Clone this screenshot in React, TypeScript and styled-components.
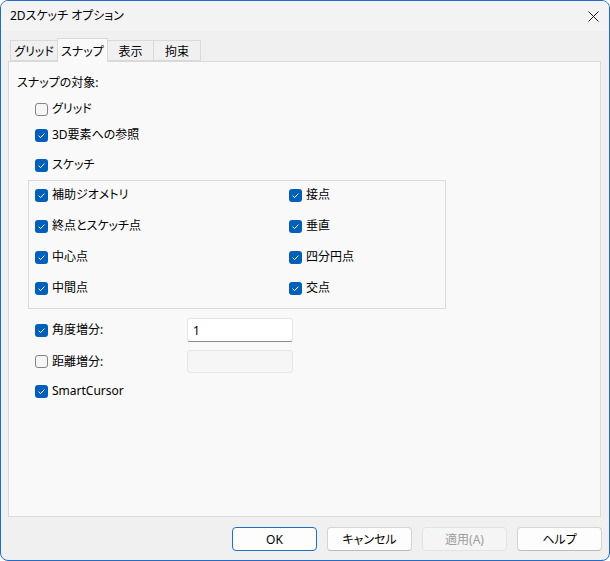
import React from "react";
import styled, { createGlobalStyle } from "styled-components";

const Global = createGlobalStyle`
  html, body { margin: 0; padding: 0; background: #ffffff; }
  body {
    font-family: "Noto Sans", "Noto Sans CJK JP", sans-serif;
    font-size: 12px;
    color: #000;
  }
  * { box-sizing: border-box; }
`;

const Window = styled.div`
  width: 610px;
  height: 561px;
  border: 1px solid #1f6ccb;
  border-radius: 8px;
  background: #f0f0f0;
  overflow: hidden;
  display: flex;
  flex-direction: column;
  font-feature-settings: "palt";
`;

const TitleBar = styled.div`
  height: 30px;
  background: #f3f3f3;
  display: flex;
  align-items: center;
  justify-content: space-between;
  padding: 0 10px 0 9px;
`;

const Title = styled.span`
  font-size: 12px;
  line-height: 16px;
  color: #000;
`;

const CloseBtn = styled.div`
  width: 12px;
  height: 12px;
  display: flex;
  align-items: center;
  justify-content: center;
`;

const Body = styled.div`
  flex: 1;
  display: flex;
  flex-direction: column;
  padding: 7px 8px 0 7px;
`;

const TabStrip = styled.div`
  display: flex;
  align-items: flex-end;
  height: 23px;
  padding-left: 2px;
  position: relative;
  z-index: 1;
`;

const Tab = styled.div<{ $active?: boolean; $w: number }>`
  width: ${(p) => p.$w}px;
  height: ${(p) => (p.$active ? 24 : 21)}px;
  margin-bottom: ${(p) => (p.$active ? -1 : 0)}px;
  border: 1px solid #d9d9d9;
  border-bottom: ${(p) => (p.$active ? "none" : "1px solid #d9d9d9")};
  margin-right: -1px;
  background: ${(p) => (p.$active ? "#f9f9f9" : "#f0f0f0")};
  display: flex;
  align-items: center;
  justify-content: center;
  padding-top: ${(p) => (p.$active ? 0 : 1)}px;
  font-size: 12px;
  color: #000;
  position: relative;
  z-index: ${(p) => (p.$active ? 2 : 1)};
`;

const Panel = styled.div`
  width: 593px;
  height: 456px;
  border: 1px solid #d9d9d9;
  background: #f9f9f9;
  display: flex;
  flex-direction: column;
  padding: 13px 8px 0 8px;
`;

const Heading = styled.div`
  height: 16px;
  line-height: 16px;
  font-size: 12px;
`;

const Row = styled.label<{ $mt: number; $h?: number; $indent?: number }>`
  display: flex;
  align-items: center;
  height: ${(p) => p.$h ?? 16}px;
  margin-top: ${(p) => p.$mt}px;
  padding-left: ${(p) => p.$indent ?? 18}px;
`;

const BoxWrap = styled.span<{ $checked: boolean }>`
  width: 13px;
  height: 13px;
  flex: none;
  border-radius: 3px;
  background: ${(p) => (p.$checked ? "#005fb8" : "#f6f6f6")};
  border: ${(p) => (p.$checked ? "none" : "1px solid #858585")};
  display: flex;
  align-items: center;
  justify-content: center;
`;

const LabelText = styled.span`
  margin-left: 4px;
  font-size: 12px;
  line-height: 16px;
  white-space: nowrap;
`;

const CheckCell = styled.span<{ $w?: number }>`
  display: flex;
  align-items: center;
  width: ${(p) => (p.$w ? `${p.$w}px` : "auto")};
`;

const Group = styled.div`
  margin-top: 7px;
  margin-left: 11px;
  width: 418px;
  border: 1px solid #dadada;
  padding: 6px 6px 12px 6px;
  display: grid;
  grid-template-columns: 254px 1fr;
  grid-auto-rows: 16px;
  row-gap: 15px;
`;

const Input = styled.div<{ $disabled?: boolean; $h: number }>`
  width: 106px;
  height: ${(p) => p.$h}px;
  border: 1px solid #e5e5e5;
  border-bottom: 1px solid ${(p) => (p.$disabled ? "#e5e5e5" : "#8a8a8a")};
  border-radius: 3px;
  background: ${(p) => (p.$disabled ? "#f6f6f6" : "#ffffff")};
  padding-left: 5px;
  display: flex;
  align-items: center;
  font-size: 12px;
`;

const Footer = styled.div`
  display: flex;
  justify-content: flex-end;
  gap: 10px;
  padding: 10px 0 0 0;
  margin-right: -1px;
`;

const Button = styled.div<{ $variant?: "default" | "disabled" }>`
  width: 85px;
  height: 24px;
  border-radius: 4px;
  display: flex;
  align-items: center;
  justify-content: center;
  font-size: 12px;
  background: ${(p) => (p.$variant === "disabled" ? "#f5f5f5" : "#fdfdfd")};
  color: ${(p) => (p.$variant === "disabled" ? "#9d9d9d" : "#000")};
  border: 1px solid
    ${(p) =>
      p.$variant === "default"
        ? "#1f6fc5"
        : p.$variant === "disabled"
        ? "#e3e3e3"
        : "#d3d3d3"};
  border-bottom-color: ${(p) =>
    p.$variant === "default"
      ? "#1f6fc5"
      : p.$variant === "disabled"
      ? "#e3e3e3"
      : "#bcbcbc"};
`;

function Check({ checked }: { checked: boolean }) {
  return (
    <BoxWrap $checked={checked}>
      {checked && (
        <svg width="13" height="13" viewBox="0 0 13 13">
          <polyline
            points="3.6,6.7 5.6,8.6 9.4,4.6"
            fill="none"
            stroke="#ffffff"
            strokeWidth="1"
          />
        </svg>
      )}
    </BoxWrap>
  );
}

function CheckItem({ label, checked = true, w }: { label: string; checked?: boolean; w?: number }) {
  return (
    <CheckCell $w={w}>
      <Check checked={checked} />
      <LabelText>{label}</LabelText>
    </CheckCell>
  );
}

export default function App() {
  return (
    <>
      <Global />
      <Window>
        <TitleBar>
          <Title>2Dスケッチ オプション</Title>
          <CloseBtn>
            <svg width="11" height="11" viewBox="0 0 11 11">
              <path d="M0.5 0.5 L10.5 10.5 M10.5 0.5 L0.5 10.5" stroke="#1a1a1a" strokeWidth="1" />
            </svg>
          </CloseBtn>
        </TitleBar>
        <Body>
          <TabStrip>
            <Tab $w={48}>グリッド</Tab>
            <Tab $w={51} $active>スナップ</Tab>
            <Tab $w={47}>表示</Tab>
            <Tab $w={48}>拘束</Tab>
          </TabStrip>
          <Panel>
            <Heading>スナップの対象:</Heading>
            <Row $mt={10}>
              <CheckItem label="グリッド" checked={false} />
            </Row>
            <Row $mt={10}>
              <CheckItem label="3D要素への参照" />
            </Row>
            <Row $mt={14}>
              <CheckItem label="スケッチ" />
            </Row>
            <Group>
              <CheckItem label="補助ジオメトリ" />
              <CheckItem label="接点" />
              <CheckItem label="終点とスケッチ点" />
              <CheckItem label="垂直" />
              <CheckItem label="中心点" />
              <CheckItem label="四分円点" />
              <CheckItem label="中間点" />
              <CheckItem label="交点" />
            </Group>
            <Row $mt={9} $h={24}>
              <CheckItem label="角度増分:" w={152} />
              <Input $h={24}>1</Input>
            </Row>
            <Row $mt={8} $h={23}>
              <CheckItem label="距離増分:" checked={false} w={152} />
              <Input $h={23} $disabled />
            </Row>
            <Row $mt={10}>
              <CheckItem label="SmartCursor" />
            </Row>
          </Panel>
          <Footer>
            <Button $variant="default">OK</Button>
            <Button>キャンセル</Button>
            <Button $variant="disabled">適用(A)</Button>
            <Button>ヘルプ</Button>
          </Footer>
        </Body>
      </Window>
    </>
  );
}
